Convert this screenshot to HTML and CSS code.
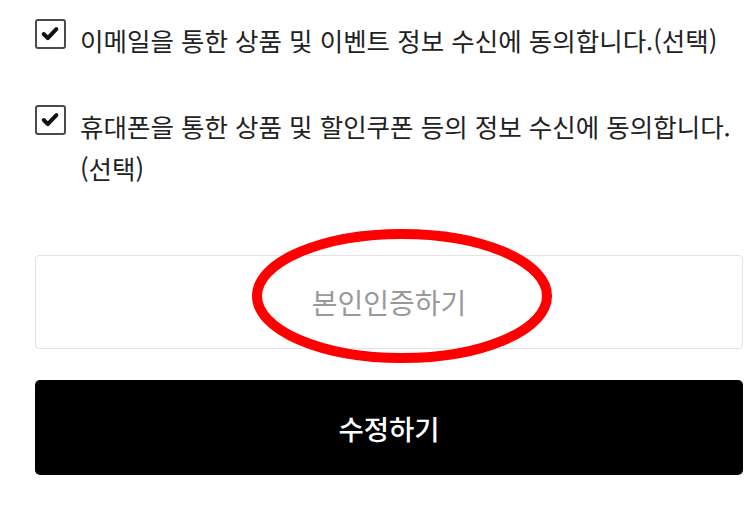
FILE: index.html
```html
<!doctype html>
<html lang="ko">
<head>
  <meta charset="UTF-8">
  <meta name="viewport" content="width=device-width, initial-scale=1.0">
  <title>회원정보 수정</title>
  <link rel="stylesheet" href="styles.css">
</head>
<body>
  <div class="container">
    <label class="agree">
      <span class="check">
        <svg viewBox="0 0 30 30" width="30" height="30"><path d="M7.5 15 L12 19.5 L21.5 9.5" fill="none" stroke="#111" stroke-width="4.4" stroke-linecap="round" stroke-linejoin="round"/></svg>
      </span>
      <span class="agree-text">이메일을 통한 상품 및 이벤트 정보 수신에 동의합니다.(선택)</span>
    </label>

    <label class="agree">
      <span class="check">
        <svg viewBox="0 0 30 30" width="30" height="30"><path d="M7.5 15 L12 19.5 L21.5 9.5" fill="none" stroke="#111" stroke-width="4.4" stroke-linecap="round" stroke-linejoin="round"/></svg>
      </span>
      <span class="agree-text">휴대폰을 통한 상품 및 할인쿠폰 등의 정보 수신에 동의합니다.<wbr>(선택)</span>
    </label>

    <div class="verify">
      <button class="btn-verify">본인인증하기</button>
      <!-- 강조 표시 -->
      <svg class="mark" viewBox="0 0 300 136" width="300" height="136">
        <ellipse cx="150" cy="68" rx="145" ry="62" fill="none" stroke="#ff0000" stroke-width="10"/>
      </svg>
    </div>

    <button class="btn-submit">수정하기</button>
  </div>
</body>
</html>
```

FILE: styles.css
```css
body {
  margin: 0;
  background: #fff;
  font-family: "Noto Sans CJK KR", "Noto Sans", sans-serif;
  color: #222;
}
.container {
  padding: 19px 6px 40px 35px;
}
.agree {
  display: flex;
  align-items: flex-start;
  font-size: 25.5px;
  line-height: 42px;
  margin-bottom: 44px;
}
.check {
  flex: none;
  box-sizing: border-box;
  width: 31px;
  height: 30px;
  border: 2px solid #4a4a4a;
  border-radius: 3px;
  margin-right: 14px;
  display: flex;
  align-items: center;
  justify-content: center;
}
.check svg {
  display: block;
}
.agree-text {
  flex: 1;
  word-break: keep-all;
}
.verify {
  position: relative;
  margin-top: 66px;
}
.btn-verify,
.btn-submit {
  display: block;
  width: 100%;
  font-family: inherit;
  cursor: pointer;
}
.btn-verify {
  height: 94px;
  background: #fff;
  border: 1px solid #e2e2e2;
  border-radius: 4px;
  color: #999;
  font-size: 28px;
}
.mark {
  position: absolute;
  left: 217px;
  top: -27px;
  pointer-events: none;
}
.btn-submit {
  margin-top: 31px;
  height: 95px;
  background: #000;
  border: none;
  border-radius: 5px;
  color: #fff;
  font-size: 27.5px;
  font-weight: 500;
}
```
